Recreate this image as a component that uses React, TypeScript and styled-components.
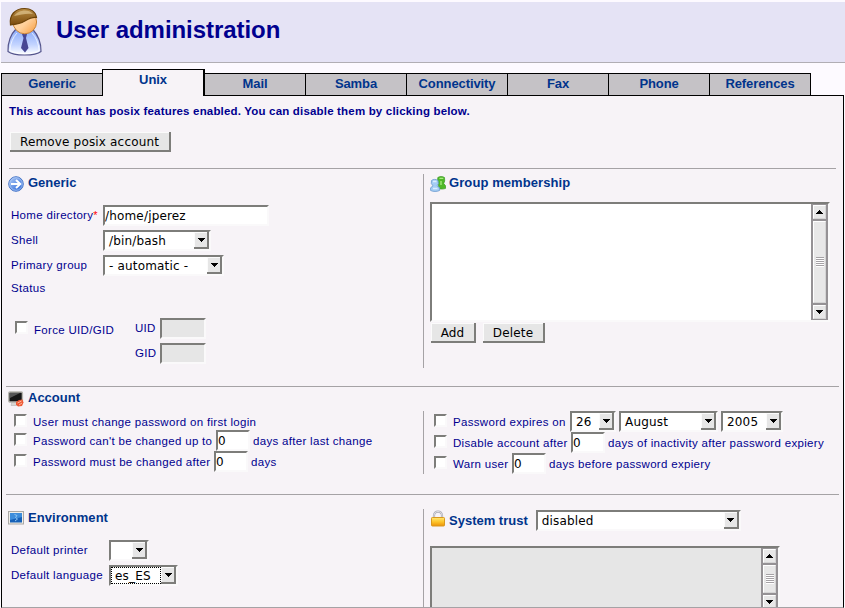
import React from 'react';
import styled, { createGlobalStyle, css } from 'styled-components';

const GlobalStyle = createGlobalStyle`
  * { box-sizing: border-box; }
  html, body { margin: 0; background: #fdfaff; overflow: hidden; }
`;

const Page = styled.div`
  display: flex;
  flex-direction: column;
  width: 845px;
  height: 608px;
  padding: 2px 0 0 1px;
  overflow: hidden;
  font-family: "Liberation Sans", Arial, sans-serif;
  color: #00008f;
`;

const Header = styled.header`
  display: flex;
  align-items: flex-start;
  flex: none;
  height: 61px;
  padding: 5px 0 0 6px;
  background: #e5e3f5;
  border-bottom: 1px solid #b1aeb4;
`;

const Title = styled.h1`
  margin: 8px 0 0 14px;
  font-size: 24px;
  line-height: 30px;
  letter-spacing: -0.06px;
`;

const TabBar = styled.nav`
  display: flex;
  align-items: flex-end;
  flex: none;
  height: 32px;
`;

const Tab = styled.a<{ $active?: boolean; $afterActive?: boolean; $last?: boolean }>`
  flex: none;
  width: ${p => (p.$active ? 103 : p.$afterActive ? 100 : p.$last ? 102 : 101)}px;
  height: 22px;
  border: 0 solid #000;
  border-width: 1px ${p => (p.$last ? 1 : 0)}px 0 ${p => (p.$afterActive ? 0 : 1)}px;
  background: #c5c2c6;
  color: #00348c;
  text-align: center;
  font-weight: bold;
  font-size: 13px;
  line-height: 20px;
  letter-spacing: -0.1px;
  ${p => p.$active && css`
    height: 27px;
    margin-bottom: -1px;
    border-right-width: 2px;
    background: #f7f3f7;
    position: relative;
    z-index: 1;
  `}
`;

const Panel = styled.main`
  display: flex;
  flex-direction: column;
  width: 843px;
  height: 513px;
  background: #f7f3f7;
  border: 1px solid #000;
  border-bottom-color: #a5a2a5;
`;

const Intro = styled.section`
  display: flex;
  flex-direction: column;
  align-items: flex-start;
  height: 72px;
  padding: 8px 0 0 7px;
`;

const Notice = styled.p`
  margin: 0 0 13px;
  font-size: 11.5px;
  line-height: 15px;
  font-weight: bold;
  letter-spacing: 0.18px;
`;

const Rule = styled.hr<{ $inset: number }>`
  flex: none;
  height: 1px;
  margin: 0 ${p => p.$inset}px;
  border: 0;
  background: #a5a2a5;
`;

const Section = styled.section<{ $h: number }>`
  display: flex;
  flex: none;
  height: ${p => p.$h}px;
`;

const LeftColumn = styled.div<{ $top: number }>`
  width: 421px;
  padding: ${p => p.$top}px 0 0 6px;
`;

const RightColumn = styled.div<{ $gap: number; $h: number }>`
  width: 420px;
  height: ${p => p.$h}px;
  margin-top: ${p => p.$gap}px;
  padding-left: 6px;
  border-left: 1px solid #a5a2a5;
  overflow: hidden;
`;

const SectionTitle = styled.div<{ $h: number; $gap: number; $pad?: number; $drop?: number; $ls?: number }>`
  display: flex;
  align-items: flex-start;
  height: ${p => p.$h}px;
  padding-top: ${p => p.$pad ?? 0}px;
  letter-spacing: ${p => p.$ls ?? 0}px;
  h2 {
    margin: ${p => p.$drop ?? 0}px 0 0 ${p => p.$gap}px;
    font-size: 13px;
    line-height: 14px;
    color: #00348c;
  }
`;

const Row = styled.div<{ $h?: number; $left?: number; $top?: number }>`
  display: flex;
  align-items: flex-start;
  height: ${p => p.$h ?? 21}px;
  padding: ${p => p.$top ?? 0}px 0 0 ${p => p.$left ?? 0}px;
  white-space: nowrap;
`;

const Label = styled.label<{ $w?: number; $top?: number; $left?: number }>`
  flex: none;
  width: ${p => (p.$w ? `${p.$w}px` : 'auto')};
  margin: ${p => p.$top ?? 4}px 0 0 ${p => p.$left ?? 0}px;
  font-size: 11.5px;
  line-height: 13px;
  letter-spacing: 0.31px;
  sup { font-size: 11px; line-height: 0; vertical-align: 0; color: #f00; letter-spacing: 0; }
`;

const sunken = css`
  border: 2px solid;
  border-color: #7d7d7a #faf9fa #faf9fa #7d7d7a;
`;

const controlText = css`
  font-family: "DejaVu Sans", sans-serif;
  font-size: 12px;
  letter-spacing: 0.17px;
  color: #000;
`;

const Input = styled.div<{ $w: number; $disabled?: boolean }>`
  ${sunken}
  ${controlText}
  flex: none;
  width: ${p => p.$w}px;
  height: 21px;
  line-height: 19px;
  background: ${p => (p.$disabled ? '#e6e6e6' : '#fff')};
`;

const Check = styled.div`
  ${sunken}
  flex: none;
  width: 13px;
  height: 13px;
  margin-top: 3px;
  background: #fff;
`;

const SelectBox = styled.div<{ $w: number; $left?: number }>`
  ${sunken}
  ${controlText}
  display: flex;
  flex: none;
  width: ${p => p.$w}px;
  height: 21px;
  margin-left: ${p => p.$left ?? 0}px;
  line-height: 19px;
  background: #fff;
`;

const SelectText = styled.span<{ $focus?: boolean }>`
  flex: 1;
  height: 17px;
  padding-left: 4px;
  ${p => p.$focus && css`
    padding-left: 3px;
    line-height: 17px;
    border: 1px dotted #000;
  `}
`;

const raised = css`
  background: #e6e6e6;
  border: 0 solid #7d7d7a;
  border-width: 0 2px 2px 0;
  box-shadow: inset 1px 1px 0 #fbfbfb;
`;

const DropButton = styled.span`
  ${raised}
  display: flex;
  justify-content: center;
  width: 15px;
  height: 17px;
  padding: 6px 0 0 1px;
`;

const Button = styled.button<{ $w: number; $left?: number }>`
  ${controlText}
  ${raised}
  flex: none;
  width: ${p => p.$w}px;
  height: 20px;
  margin-left: ${p => p.$left ?? 0}px;
  padding: 2px 0 0;
  line-height: 16px;
`;

const ListBox = styled.div<{ $w: number; $h: number; $disabled?: boolean }>`
  ${sunken}
  display: flex;
  justify-content: flex-end;
  width: ${p => p.$w}px;
  height: ${p => p.$h}px;
  background: ${p => (p.$disabled ? '#e6e6e6' : '#fff')};
`;

const Scrollbar = styled.div`
  display: flex;
  flex-direction: column;
  gap: 2px;
  width: 17px;
  height: 100%;
  padding: 1px 2px 1px 2px;
  background: #959295;
`;

const ScrollPart = styled.div<{ $h?: number }>`
  display: flex;
  align-items: center;
  justify-content: center;
  flex: ${p => (p.$h ? `0 0 ${p.$h}px` : '1')};
  background: #e8e8e8;
  border: 1px solid #fff;
  border-right-color: #d5d5d5;
  border-bottom-color: #d5d5d5;
`;

const ArrowIcon = ({ up }: { up?: boolean }) => (
  <svg width="7" height="4" viewBox="0 0 7 4" shapeRendering="crispEdges">
    <path d={up ? 'M3 0h1v1h1v1h1v1h1v1H0V3h1V2h1V1h1z' : 'M0 0h7v1H6v1H5v1H4v1H3V3H2V2H1V1H0z'} />
  </svg>
);

const GripIcon = () => (
  <svg width="8" height="10" viewBox="0 0 8 10" shapeRendering="crispEdges">
    <path d="M0 .5h8M0 2.5h8M0 4.5h8M0 6.5h8M0 8.5h8" stroke="#a5a2a5" />
    <path d="M0 1.5h8M0 3.5h8M0 5.5h8M0 7.5h8M0 9.5h8" stroke="#fff" />
  </svg>
);

const Select = ({ w, left, text, focus }: { w: number; left?: number; text?: string; focus?: boolean }) => (
  <SelectBox $w={w} $left={left}>
    <SelectText $focus={focus}>{text}</SelectText>
    <DropButton><ArrowIcon /></DropButton>
  </SelectBox>
);

const VScroll = () => (
  <Scrollbar>
    <ScrollPart $h={14}><ArrowIcon up /></ScrollPart>
    <ScrollPart><GripIcon /></ScrollPart>
    <ScrollPart $h={14}><ArrowIcon /></ScrollPart>
  </Scrollbar>
);

const UserIcon = () => (
  <svg width="35" height="50" viewBox="0 0 35 50">
    <defs>
      <linearGradient id="robe" x1="0" y1="0" x2="0" y2="1">
        <stop offset="0" stopColor="#86a8fa" /><stop offset=".6" stopColor="#c3d4ff" /><stop offset="1" stopColor="#fff" />
      </linearGradient>
      <linearGradient id="face" x1="0" y1="0" x2="1" y2="1">
        <stop offset="0" stopColor="#ffe0b8" /><stop offset=".55" stopColor="#ffd09a" /><stop offset="1" stopColor="#f79a3c" />
      </linearGradient>
      <linearGradient id="hair" x1="0" y1="0" x2="0" y2="1">
        <stop offset="0" stopColor="#b98d45" /><stop offset="1" stopColor="#7a4a0c" />
      </linearGradient>
    </defs>
    <path d="M9 22C4 27 .8 35 1 44.500c3 2.500 9 3.500 16.500 3.500S31 47 34 44.500C34.200 35 30 27 25.500 22z" fill="url(#robe)" stroke="#55558c" strokeWidth="1.200" />
    <path d="M10 26C6 30 3.500 36 2.800 43.500c4 2.300 9 3 14.700 3s11-.7 14.700-3C31.500 36 29 30 25 26" fill="none" stroke="#fff" strokeWidth="1" opacity=".7" />
    <path d="M15 27h5l-1 4 2.500 10-3.500 4.500-4-4.500 2.500-10z" fill="#474794" />
    <circle cx="17.800" cy="15" r="11.800" fill="url(#face)" stroke="#c98335" strokeWidth="1" />
    <path d="M3.500 18C2 8 8 1.500 17.500 1.500c6 0 11 3 12 9C24 9.500 20 13 15 15.500 11 17.500 7 17 3.500 18z" fill="url(#hair)" stroke="#6b4208" strokeWidth="1.200" />
    <path d="M7 9c4-6 14-8 19-2-7-1-12 1-19 2z" fill="#e0c590" opacity=".7" />
  </svg>
);

const GenericIcon = () => (
  <svg width="16" height="16" viewBox="0 0 16 16">
    <defs><linearGradient id="disc" x1="0" y1="0" x2="1" y2="1"><stop stopColor="#b3cdf7" /><stop offset="1" stopColor="#1f5fd6" /></linearGradient></defs>
    <circle cx="8" cy="8" r="7.300" fill="url(#disc)" stroke="#4a78c8" />
    <circle cx="8" cy="8" r="6.300" fill="none" stroke="#b8cef5" strokeWidth=".7" />
    <path d="M3 8h9M8 4l4.300 4L8 12" fill="none" stroke="#fff" strokeWidth="2" />
  </svg>
);

const GroupIcon = () => (
  <svg width="16" height="16" viewBox="0 0 16 16">
    <path d="M7.800 1.500c2-1.300 4.700-1.300 6.700 0l.2 3.500-1 2.500 2 2.500v2.300c-2 .9-5 1-7 .2L8.500 8l-1-2.500z" fill="#4fb828" stroke="#3a9a24" strokeWidth=".7" />
    <path d="M9.500 2.300h3.800M11 5v4" stroke="#a9ec82" strokeWidth="1.300" />
    <path d="M1.500 4.500c1.700-1.500 4.800-1.500 6.500 0l.4 3-1.400 2.300 2.600 2v2.700c-2.500 1.300-6.500 1.300-9 0v-2.700l2.400-2L1.300 7.500z" fill="#a4cdf4" stroke="#6a99cf" strokeWidth=".8" />
    <path d="M3 5.500h3.500M3 12.500h4.500" stroke="#dceeff" strokeWidth="1.300" />
  </svg>
);

const AccountIcon = () => (
  <svg width="16" height="16" viewBox="0 0 16 16">
    <path d="M4 11h6l1 3.500H3z" fill="#d8d6d2" stroke="#aaa" strokeWidth=".5" />
    <rect x=".8" y="1" width="13.600" height="10" rx="1" fill="#161616" stroke="#b7b5af" strokeWidth="1.400" />
    <path d="M2 2h10L2 7z" fill="#555" />
    <path d="M8 11l3-2 3.500-.5 1 3-1.500 3.500-4 .5-2-2z" fill="#ee5a36" />
    <path d="M9.500 12l4-2M11 14l3-2" stroke="#ffb59b" />
  </svg>
);

const EnvironmentIcon = () => (
  <svg width="16" height="14" viewBox="0 0 16 14">
    <rect x=".5" y=".5" width="15" height="12.500" fill="#f0eee8" stroke="#aaa8a5" />
    <rect x="2" y="2" width="12" height="9.500" fill="#1660b8" />
    <path d="M2 2h12v4L2 9z" fill="#3e8ddb" />
    <path d="M6.500 3.500l2.500 1L7.500 6.500l2 1.500-2.500 2" fill="none" stroke="#8fc5f2" strokeWidth="1" />
  </svg>
);

const LockIcon = () => (
  <svg width="16" height="17" viewBox="0 0 16 17">
    <defs><linearGradient id="lock" x1="0" y1="0" x2="0" y2="1"><stop stopColor="#ffe873" /><stop offset=".5" stopColor="#fdc52c" /><stop offset="1" stopColor="#ed9208" /></linearGradient></defs>
    <path d="M4 9V5.500c0-5.300 8-5.300 8 0V9" fill="none" stroke="#a9a9b5" strokeWidth="2.200" />
    <path d="M4 9V5.500c0-5.300 8-5.300 8 0V9" fill="none" stroke="#eee" strokeWidth=".8" />
    <rect x="1.500" y="7.500" width="13" height="8.500" rx=".8" fill="url(#lock)" stroke="#d9981f" />
  </svg>
);

export default function App() {
  return (
    <>
      <GlobalStyle />
      <Page>
        <Header>
          <UserIcon />
          <Title>User administration</Title>
        </Header>
        <TabBar>
          <Tab>Generic</Tab>
          <Tab $active>Unix</Tab>
          <Tab $afterActive>Mail</Tab>
          <Tab>Samba</Tab>
          <Tab>Connectivity</Tab>
          <Tab>Fax</Tab>
          <Tab>Phone</Tab>
          <Tab $last>References</Tab>
        </TabBar>
        <Panel>
          <Intro>
            <Notice>This account has posix features enabled. You can disable them by clicking below.</Notice>
            <Button $w={161} $left={1}>Remove posix account</Button>
          </Intro>
          <Rule $inset={7} />

          <Section $h={217}>
            <LeftColumn $top={7}>
              <SectionTitle $h={29} $gap={4}><GenericIcon /><h2>Generic</h2></SectionTitle>
              <Row $h={25} $left={3}>
                <Label $w={92}>Home directory<sup>*</sup></Label>
                <Input $w={166}>/home/jperez</Input>
              </Row>
              <Row $h={25} $left={3}>
                <Label $w={92}>Shell</Label>
                <Select w={108} text="/bin/bash" />
              </Row>
              <Row $h={25} $left={3}>
                <Label $w={92}>Primary group</Label>
                <Select w={121} text="- automatic -" />
              </Row>
              <Row $h={38} $left={3}>
                <Label $top={2}>Status</Label>
              </Row>
              <Row $h={25} $left={7}>
                <Check />
                <Label $w={101} $left={6} $top={6}>Force UID/GID</Label>
                <Label $w={25}>UID</Label>
                <Input $w={46} $disabled />
              </Row>
              <Row $left={127}>
                <Label $w={25}>GID</Label>
                <Input $w={46} $disabled />
              </Row>
            </LeftColumn>
            <RightColumn $gap={5} $h={194}>
              <SectionTitle $h={28} $gap={3} $pad={2} $ls={0.09}><GroupIcon /><h2>Group membership</h2></SectionTitle>
              <ListBox $w={400} $h={120}><VScroll /></ListBox>
              <Row $left={1} $top={1}>
                <Button $w={45}>Add</Button>
                <Button $w={62} $left={7}>Delete</Button>
              </Row>
            </RightColumn>
          </Section>
          <Rule $inset={4} />

          <Section $h={107}>
            <LeftColumn $top={4}>
              <SectionTitle $h={20} $gap={4}><AccountIcon /><h2>Account</h2></SectionTitle>
              <Row $h={19} $left={6}>
                <Check />
                <Label $left={6} $top={5}>User must change password on first login</Label>
              </Row>
              <Row $left={6}>
                <Check />
                <Label $w={183} $left={6} $top={5}>Password can't be changed up to</Label>
                <Input $w={34}>0</Input>
                <Label $left={3} $top={5}>days after last change</Label>
              </Row>
              <Row $left={6}>
                <Check />
                <Label $w={181} $left={6} $top={5}>Password must be changed after</Label>
                <Input $w={34}>0</Input>
                <Label $left={3} $top={5}>days</Label>
              </Row>
            </LeftColumn>
            <RightColumn $gap={24} $h={63}>
              <Row $left={4}>
                <Check />
                <Label $w={117} $left={6} $top={5}>Password expires on</Label>
                <Select w={46} text="26" />
                <Select w={99} left={3} text="August" />
                <Select w={62} left={3} text="2005" />
              </Row>
              <Row $left={4}>
                <Check />
                <Label $w={118} $left={6} $top={5}>Disable account after</Label>
                <Input $w={34}>0</Input>
                <Label $left={3} $top={5}>days of inactivity after password expiery</Label>
              </Row>
              <Row $left={4}>
                <Check />
                <Label $w={59} $left={6} $top={5}>Warn user</Label>
                <Input $w={34}>0</Input>
                <Label $left={3} $top={5}>days before password expiery</Label>
              </Row>
            </RightColumn>
          </Section>
          <Rule $inset={4} />

          <Section $h={112}>
            <LeftColumn $top={16}>
              <SectionTitle $h={29} $gap={4} $ls={0.05}><EnvironmentIcon /><h2>Environment</h2></SectionTitle>
              <Row $h={25} $left={3}>
                <Label $w={98}>Default printer</Label>
                <Select w={40} />
              </Row>
              <Row $left={3}>
                <Label $w={98}>Default language</Label>
                <Select w={69} text="es_ES" focus />
              </Row>
            </LeftColumn>
            <RightColumn $gap={14} $h={98}>
              <Row $h={37} $top={1}>
                <SectionTitle $h={21} $gap={3} $drop={4}><LockIcon /><h2>System trust</h2></SectionTitle>
                <Select w={205} left={8} text="disabled" />
              </Row>
              <ListBox $w={350} $h={66} $disabled><VScroll /></ListBox>
            </RightColumn>
          </Section>
        </Panel>
      </Page>
    </>
  );
}
